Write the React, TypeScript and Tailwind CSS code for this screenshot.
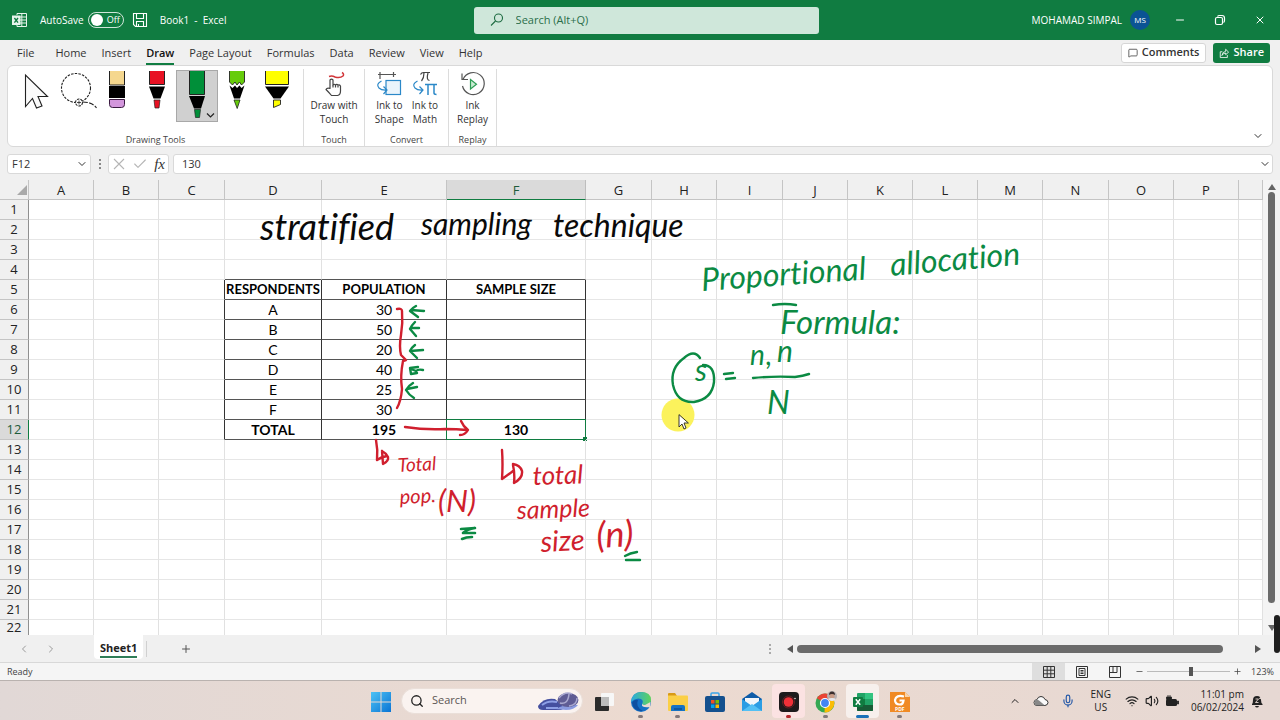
import React from "react";
import {
  ChevronDown,
  ChevronLeft,
  ChevronRight,
  ChevronUp,
  Check,
  Plus,
  Minus,
  Search,
  X,
  MessageSquare,
  Mic,
  Wifi,
  Volume2,
} from "lucide-react";

const UI = "font-['Open_Sans','Noto_Sans',sans-serif]";

/* ---------- Title bar ---------- */

function ExcelMark() {
  return (
    <svg viewBox="0 0 16 16" className="size-4" fill="none" stroke="#e6f4ec" strokeWidth="1">
      <path d="M5 3V1.500h9.500v13H5V13M5 5h9.500M8 8h6.500M5 11h9.500M9.800 1.500v13" />
      <rect x="0.500" y="4" width="7.500" height="8.500" fill="#e6f4ec" />
      <path d="M2.400 6l3.600 4.600M6 6l-3.600 4.600" stroke="#107c41" strokeWidth="1.400" />
    </svg>
  );
}

function TitleBar() {
  return (
    <header className="flex h-10 shrink-0 items-center bg-[#107c41] text-[11px] text-white">
      <div className="flex w-[37%] items-center pl-3">
        <ExcelMark />
        <span className="ml-3 text-[10px]" id="autosave">AutoSave</span>
        <button
          type="button"
          role="switch"
          aria-checked="false"
          aria-labelledby="autosave"
          className="ml-1 flex h-4 w-9 items-center gap-1 rounded-full border border-white/80 px-[2px]"
        >
          <span className="size-3 rounded-full bg-white" />
          <span className="text-[9px] leading-3">Off</span>
        </button>
        <button type="button" aria-label="Save" className="ml-2">
          <svg viewBox="0 0 16 16" className="size-4" fill="none" stroke="#fff" strokeWidth="1.100">
            <path d="M1.500 1.500h13v13H3.500l-2-2zM4.500 1.500v5h7v-5M4.500 14.500V9.500h7v5M6.500 12v2.500" />
          </svg>
        </button>
        <h1 className="ml-3 text-[10px] whitespace-pre">Book1  -  Excel</h1>
      </div>
      <label className="flex h-[27px] w-[27%] items-center gap-3 rounded-[3px] bg-[#cfe7da] pl-4 text-[#1d6b41]">
        <svg viewBox="0 0 14 14" className="size-[14px] shrink-0" fill="none" stroke="currentColor" strokeWidth="1.100">
          <circle cx="8.500" cy="5" r="4" />
          <path d="M5.500 8L1 12.500" />
        </svg>
        <input
          aria-label="Search"
          placeholder="Search (Alt+Q)"
          className="w-full bg-transparent text-[11px] outline-none placeholder:text-[#2b6e4a]"
        />
      </label>
      <div className="flex flex-1 items-center justify-end pr-3">
        <span className="text-[10px]">MOHAMAD SIMPAL</span>
        <span className="ml-2 flex size-5 items-center justify-center rounded-full bg-[#0b5394] text-[8px]">MS</span>
        <button type="button" aria-label="Minimize" className="ml-[22px] flex w-4 justify-center">
          <Minus className="size-3" strokeWidth={2} />
        </button>
        <button type="button" aria-label="Restore" className="ml-6 flex w-4 justify-center">
          <svg viewBox="0 0 12 12" className="size-3" fill="none" stroke="#fff" strokeWidth="1.200">
            <rect x="1.500" y="3.500" width="7" height="7" rx="1.500" />
            <path d="M3.500 2.500q.5-1 2-1h2.500q2.500 0 2.500 2.500v2.500q0 1.500-1 2" />
          </svg>
        </button>
        <button type="button" aria-label="Close" className="ml-6 flex w-4 justify-center">
          <X className="size-3" strokeWidth={2} />
        </button>
      </div>
    </header>
  );
}

/* ---------- Ribbon tabs ---------- */

const TABS = ["File", "Home", "Insert", "Draw", "Page Layout", "Formulas", "Data", "Review", "View", "Help"];

function RibbonTabs() {
  return (
    <div className="flex h-[25px] shrink-0 items-center justify-between pr-[10px] pl-[17px] text-[11px] text-[#333]">
      <nav className="flex items-center gap-[15px] pt-[2px]">
        {TABS.map((t) => (
          <button
            key={t}
            type="button"
            className={
              t === "Draw"
                ? "border-b-2 border-[#107c41] leading-5 font-semibold text-[#111]"
                : t === "File"
                  ? "mr-[6px] border-b-2 border-transparent leading-5"
                  : "border-b-2 border-transparent leading-5"
            }
          >
            {t}
          </button>
        ))}
      </nav>
      <div className="flex items-center gap-[7px]">
        <button
          type="button"
          className="flex h-5 items-center gap-1 rounded-[3px] border border-[#d6d6d6] bg-white px-[6px] font-semibold"
        >
          <MessageSquare className="size-[10px]" strokeWidth={1.8} />
          Comments
        </button>
        <button
          type="button"
          className="flex h-5 items-center gap-1 rounded-[3px] bg-[#107c41] px-[6px] font-semibold text-white"
        >
          <svg viewBox="0 0 12 12" className="size-[10px]" fill="none" stroke="#fff" strokeWidth="1">
            <path d="M4 4.500H1.500v7h8.500V8.500M3.500 9q.5-4.500 4.500-5V1.500L11.500 5 8 8V6Q5 6 3.500 9z" />
          </svg>
          Share
        </button>
      </div>
    </div>
  );
}

/* ---------- Ribbon ---------- */

function ToolSelect() {
  return (
    <svg viewBox="0 0 40 50" className="h-[50px] w-10" fill="#fafafa" stroke="#222" strokeWidth="1.100">
      <path d="M8.500 4v31.500l7-8 4 9.500 5.500-2-4-9.500h9.500z" />
    </svg>
  );
}

function ToolLasso() {
  return (
    <svg viewBox="0 0 40 50" className="h-[50px] w-10" fill="none" stroke="#222" strokeWidth="1.100">
      <circle cx="19" cy="17" r="14.500" strokeDasharray="2.500 1.200" />
      <circle cx="22" cy="31.500" r="3.500" fill="#fff" strokeDasharray="2.500 1" />
      <path d="M20 31.500h4M22 29.500v4" strokeWidth=".8" />
      <path d="M25.500 31q10 0 14 6" strokeDasharray="5 1.500" />
    </svg>
  );
}

function ToolEraser() {
  return (
    <svg viewBox="0 0 40 50" className="h-[50px] w-10">
      <path d="M12.500 0v14h15V0" fill="#f5d78e" stroke="#222" />
      <path d="M12 15h16v12H12z" fill="#000" />
      <path d="M12.500 28.500h15v5q0 3-3 3h-9q-3 0-3-3z" fill="#d396dc" stroke="#3a1a40" />
    </svg>
  );
}

function ToolPen({ color }: { color: string }) {
  return (
    <svg viewBox="0 0 40 50" className="h-[50px] w-10">
      <path d="M12.500 0v13.500h15V0" fill={color} stroke="#222" />
      <path d="M12 15.500h16L23.500 27.500h-7z" fill="#000" />
      <path d="M17 29h6l-1 8h-4z" fill={color} stroke="#222" strokeWidth=".7" />
    </svg>
  );
}

function ToolPenActive() {
  return (
    <svg viewBox="0 0 40 50" className="h-[50px] w-10">
      <path d="M12.500 0v23.500h15V0" fill="#008f39" stroke="#222" />
      <path d="M12 25h16l-4 12.500h-7z" fill="#000" />
      <path d="M17.500 38.500h6l-1 8h-4z" fill="#008f39" stroke="#222" strokeWidth=".7" />
      <path d="M30 42.500l3.500 3.500 3.500-3.500" fill="none" stroke="#222" strokeWidth="1.200" />
    </svg>
  );
}

function ToolPencil() {
  return (
    <svg viewBox="0 0 40 50" className="h-[50px] w-10">
      <path d="M12.500 0v11l3 3 2.500-3 2 3 2.500-3 2 3 3-3V0" fill="#66cc0a" stroke="#222" strokeWidth=".9" />
      <path d="M12.500 14.500l3 2.500 2.500-2.500 2 2.500 2.500-2.500 2 2.500 3-2.500-4.500 13h-6z" fill="#000" />
      <path d="M17 29h6l-2.800 8.500z" fill="#66cc0a" stroke="#222" strokeWidth=".8" />
    </svg>
  );
}

function ToolHighlighter() {
  return (
    <svg viewBox="0 0 40 50" className="h-[50px] w-10">
      <path d="M8.500 0v13.500h23V0" fill="#ff0" stroke="#222" />
      <path d="M8 15.500h24l-8.500 12h-7z" fill="#000" />
      <path d="M16.500 29h7v4.500l-7 3z" fill="#ff0" stroke="#222" strokeWidth=".9" />
    </svg>
  );
}

const TOOLS: { label: string; icon: React.ReactNode; active?: boolean }[] = [
  { label: "Select", icon: <ToolSelect /> },
  { label: "Lasso Select", icon: <ToolLasso /> },
  { label: "Eraser", icon: <ToolEraser /> },
  { label: "Pen: Red", icon: <ToolPen color="#e81123" /> },
  { label: "Pen: Green", icon: <ToolPenActive />, active: true },
  { label: "Pencil: Lime", icon: <ToolPencil /> },
  { label: "Highlighter: Yellow", icon: <ToolHighlighter /> },
];

function TouchIcon() {
  return (
    <svg viewBox="0 0 24 26" className="h-[26px] w-6" fill="none" stroke="#444" strokeWidth="1.200" strokeLinejoin="round">
      <path d="M8 17.500V9q1.500-1.600 3 0v5q1.200-1.500 2.500 0 1.300-1.200 2.500.2 1.400-.8 2.500.8v5q0 4-3 4.500H9.500Q7.500 22 4 18.500q1-2 4-1z" />
      <path d="M11 14v2.500M13.500 14v2.500M16 14.500v2" />
      <path d="M7 5.500q3-1 6 .5 5 1.500 8-1 1.500-2-1-3.500" stroke="#d13438" strokeWidth="1.500" />
    </svg>
  );
}

function ShapeIcon() {
  return (
    <svg viewBox="0 0 26 26" className="h-[26px] w-[26px]" fill="none" strokeWidth="1.200">
      <path d="M2 3.500h18M4 1v7M17.500 1v5" stroke="#555" />
      <rect x="10" y="9.500" width="14.500" height="14" fill="#eaf4fb" stroke="#2b88c8" />
      <path d="M5.500 10q-6 3-2.500 7 2.500 2.500 8 2M7.500 15.500l3.500 3.500-3.500 4" stroke="#2b88c8" />
    </svg>
  );
}

function MathIcon() {
  return (
    <svg viewBox="0 0 26 26" className="h-[26px] w-[26px]" fill="none" strokeWidth="1.200">
      <path d="M8.500 3.500q1-2 3-2h6.500M12 2q0 5-2.500 8M16 2q-2 7 1.500 7.500" stroke="#444" />
      <path d="M5.500 10q-6 3-2.500 7 2.500 2.500 8 2M7.500 15.500l3.500 3.500-3.500 4" stroke="#2b88c8" />
      <path d="M13 13.500h12M16 13.500V24M22 13.500V22q0 1.500 2.500 1.500" stroke="#2b88c8" strokeWidth="1.500" />
    </svg>
  );
}

function ReplayIcon() {
  return (
    <svg viewBox="0 0 26 26" className="h-[26px] w-[26px]" fill="none" strokeWidth="1.200">
      <path d="M3 8.500A11 11 0 1 1 2.500 15M2 2.500v6h6" stroke="#555" />
      <path d="M10.500 8.500v9.500l6-4.800z" fill="#c9ecd3" stroke="#2e9e56" />
    </svg>
  );
}

function BigButton({ icon, top, bottom }: { icon: React.ReactNode; top: string; bottom: string }) {
  return (
    <button type="button" className="flex flex-col items-center text-[10px] leading-[14px] whitespace-nowrap text-[#333]">
      {icon}
      <span className="mt-px">{top}</span>
      <span>{bottom}</span>
    </button>
  );
}

function Group({ label, width, children }: { label: string; width: string; children: React.ReactNode }) {
  return (
    <section className={"flex flex-col items-center justify-between border-r border-[#dcdcdc] " + width}>
      <div className="flex justify-center pt-[2px]">{children}</div>
      <h2 className="text-[9px] leading-3 text-[#444]">{label}</h2>
    </section>
  );
}

function Ribbon() {
  return (
    <div className="mx-[7px] flex h-[82px] shrink-0 items-end justify-between rounded-md border border-[#d9d9d9] bg-white pr-1">
      <div className="flex h-full pt-[3px]">
        <Group label="Drawing Tools" width="w-[296px]">
          <div className="flex pl-[2px]">
            {TOOLS.map((t) => (
              <button
                key={t.label}
                type="button"
                aria-label={t.label}
                className={t.active ? "bg-[#d0d0d0] outline outline-[#a8a8a8]" : ""}
              >
                {t.icon}
              </button>
            ))}
          </div>
        </Group>
        <Group label="Touch" width="w-[61px]">
          <BigButton icon={<TouchIcon />} top="Draw with" bottom="Touch" />
        </Group>
        <Group label="Convert" width="w-[84px]">
          <div className="flex gap-2">
            <BigButton icon={<ShapeIcon />} top="Ink to" bottom="Shape" />
            <BigButton icon={<MathIcon />} top="Ink to" bottom="Math" />
          </div>
        </Group>
        <Group label="Replay" width="w-12">
          <BigButton icon={<ReplayIcon />} top="Ink" bottom="Replay" />
        </Group>
      </div>
      <button type="button" aria-label="Ribbon display options" className="p-1">
        <ChevronDown className="size-3 text-[#333]" />
      </button>
    </div>
  );
}

/* ---------- Formula bar ---------- */

function FormulaBar() {
  return (
    <div className="mx-[7px] mt-[7px] mb-[6px] flex h-5 shrink-0 items-stretch text-[11px] text-[#333]">
      <div className="flex w-[84px] items-center rounded-[3px] border border-[#d9d9d9] bg-white pr-[2px] pl-1">
        <input aria-label="Name box" defaultValue="F12" className="w-full min-w-0 bg-transparent outline-none" />
        <ChevronDown className="size-3 shrink-0" />
      </div>
      <div className="flex w-[17px] flex-col items-center justify-center gap-[2px]">
        <span className="size-[2px] bg-[#888]" />
        <span className="size-[2px] bg-[#888]" />
        <span className="size-[2px] bg-[#888]" />
      </div>
      <div className="flex w-[61px] items-center justify-between rounded-[3px] border border-[#d9d9d9] bg-white px-[3px]">
        <button type="button" aria-label="Cancel">
          <svg viewBox="0 0 14 14" className="size-[14px]" fill="none" stroke="#b5b5b5" strokeWidth="1.100">
            <path d="M2 2l10 10M12 2L2 12" />
          </svg>
        </button>
        <button type="button" aria-label="Enter">
          <Check className="size-4 text-[#b5b5b5]" strokeWidth={1.6} />
        </button>
        <button type="button" aria-label="Insert function" className="font-['Liberation_Serif',serif] text-[15px] leading-4 italic">
          fx
        </button>
      </div>
      <div className="ml-1 flex flex-1 items-center rounded-[3px] border border-[#d9d9d9] bg-white pr-px pl-2">
        <input aria-label="Formula" defaultValue="130" className="w-full bg-transparent outline-none" />
        <ChevronDown className="size-3 shrink-0" />
      </div>
    </div>
  );
}

/* ---------- Sheet ---------- */

const COLUMNS = [
  { name: "A", width: "w-[65px]" },
  { name: "B", width: "w-[65px]" },
  { name: "C", width: "w-[66px]" },
  { name: "D", width: "w-[97px]" },
  { name: "E", width: "w-[125px]" },
  { name: "F", width: "w-[139px]" },
  { name: "G", width: "w-[66px]" },
  { name: "H", width: "w-[65px]" },
  { name: "I", width: "w-[66px]" },
  { name: "J", width: "w-[65px]" },
  { name: "K", width: "w-[65px]" },
  { name: "L", width: "w-[65px]" },
  { name: "M", width: "w-[65px]" },
  { name: "N", width: "w-[66px]" },
  { name: "O", width: "w-[65px]" },
  { name: "P", width: "w-[65px]" },
  { name: "", width: "" },
];

const DATA: Record<number, string[]> = {
  5: ["RESPONDENTS", "POPULATION", "SAMPLE SIZE"],
  6: ["A", "30", ""],
  7: ["B", "50", ""],
  8: ["C", "20", ""],
  9: ["D", "40", ""],
  10: ["E", "25", ""],
  11: ["F", "30", ""],
  12: ["TOTAL", "195", "130"],
};

const LAST_ROW = 22;

function cellClass(row: number, col: number) {
  const inRows = row >= 5 && row <= 12;
  const height = row === LAST_ROW ? "h-4" : "h-5";
  const right = inRows && col >= 2 && col <= 5 ? "border-r-[#333]" : "border-r-[#e1e1e1]";
  const bottom = row >= 4 && row <= 12 && col >= 3 && col <= 5 ? "border-b-[#555]" : "border-b-[#e6e6e6]";
  const weight = row === 5 ? "font-bold text-[13px]" : row === 12 ? "font-bold" : "";
  return `relative border-r border-b p-0 text-center leading-[19px] whitespace-nowrap ${height} ${right} ${bottom} ${weight}`;
}

function rowHeadClass(row: number) {
  const base = "border-r border-b border-b-[#c4c4c4] p-0 font-['Open_Sans','Noto_Sans',sans-serif] text-[13px] font-normal";
  if (row === 12) return `${base} h-5 border-r-[#107c41] bg-[#dadada] leading-[19px] text-[#1e5c3a]`;
  if (row === LAST_ROW) return `${base} h-4 border-r-[#8f8f8f] bg-[#f0f0f0] leading-[15px] text-[#222]`;
  return `${base} h-5 border-r-[#8f8f8f] bg-[#f0f0f0] leading-[19px] text-[#222]`;
}

function Sheet() {
  const rows = Array.from({ length: LAST_ROW }, (_, i) => i + 1);
  return (
    <table className="w-full table-fixed border-separate border-spacing-0 bg-white font-['Lato',sans-serif] text-[14px] text-black">
      <colgroup>
        <col className="w-[29px]" />
        {COLUMNS.map((c, i) => (
          <col key={i} className={c.width} />
        ))}
      </colgroup>
      <thead className="font-['Open_Sans','Noto_Sans',sans-serif] text-[13px] leading-[18px]">
        <tr>
          <th className="h-5 border-r border-b border-[#c4c4c4] bg-[#f0f0f0] p-0">
            <svg viewBox="0 0 12 12" className="ml-auto size-3">
              <path d="M11 1v10H1z" fill="#a9a9a9" />
            </svg>
          </th>
          {COLUMNS.map((c, i) => (
            <th
              key={i}
              scope="col"
              className={
                c.name === "F"
                  ? "h-5 border-r border-b border-r-[#bdbdbd] border-b-[#107c41] bg-[#dadada] p-0 pt-px font-normal text-[#1e5c3a]"
                  : "h-5 border-r border-b border-[#c4c4c4] bg-[#f0f0f0] p-0 pt-px font-normal text-[#222]"
              }
            >
              {c.name}
            </th>
          ))}
        </tr>
      </thead>
      <tbody>
        {rows.map((r) => (
          <tr key={r}>
            <th scope="row" className={rowHeadClass(r)}>
              {r}
            </th>
            {COLUMNS.map((_, i) => (
              <td key={i} className={cellClass(r, i)}>
                {i >= 3 && i <= 5 && DATA[r] ? DATA[r][i - 3] : null}
                {r === 12 && i === 5 && (
                  <span className="absolute -inset-px border border-[#107c41]">
                    <span className="absolute -right-[2px] -bottom-[2px] size-1 bg-[#107c41]" />
                  </span>
                )}
              </td>
            ))}
          </tr>
        ))}
      </tbody>
    </table>
  );
}

/* ---------- Ink annotations ---------- */

const BLACK = "#0a0a0a";
const GREEN = "#0b8a43";
const RED = "#d01f2e";

const NOTES = [
  { text: "stratified", x: 260, y: 240, size: 36, turn: 0, color: BLACK },
  { text: "sampling", x: 421, y: 235, size: 30, turn: 0, color: BLACK },
  { text: "technique", x: 553, y: 237, size: 32, turn: 0, color: BLACK },
  { text: "Proportional", x: 702, y: 291, size: 32, turn: -4, color: GREEN },
  { text: "allocation", x: 891, y: 276, size: 32, turn: -5, color: GREEN },
  { text: "Formula:", x: 780, y: 334, size: 33, turn: 0, color: GREEN },
  { text: "s", x: 695, y: 381, size: 30, turn: 0, color: GREEN },
  { text: "n", x: 750, y: 365, size: 28, turn: 0, color: GREEN },
  { text: ",", x: 766, y: 365, size: 28, turn: 0, color: GREEN },
  { text: "n", x: 777, y: 362, size: 30, turn: 0, color: GREEN },
  { text: "N", x: 767, y: 414, size: 32, turn: 0, color: GREEN },
  { text: "Total", x: 398, y: 472, size: 19, turn: -3, color: RED },
  { text: "pop.", x: 400, y: 504, size: 20, turn: -3, color: RED },
  { text: "(N)", x: 438, y: 512, size: 31, turn: 0, color: RED },
  { text: "total", x: 533, y: 485, size: 26, turn: -2, color: RED },
  { text: "sample", x: 517, y: 519, size: 25, turn: -2, color: RED },
  { text: "size", x: 541, y: 552, size: 29, turn: -3, color: RED },
  { text: "(n)", x: 597, y: 548, size: 36, turn: -3, color: RED },
];

function Ink() {
  return (
    <svg
      viewBox="0 180 1263 455"
      className="pointer-events-none absolute top-0 left-0 h-[455px] w-[1263px] font-['Lato',sans-serif] [font-variant-ligatures:none]"
      fill="none"
      strokeLinecap="round"
      strokeLinejoin="round"
    >
      <circle cx="678" cy="415" r="16.500" fill="#fbf25c" />
      {NOTES.map((n, i) => (
        <text
          key={i}
          x={n.x}
          y={n.y}
          fontSize={n.size}
          fontStyle="italic"
          fill={n.color}
          transform={`rotate(${n.turn} ${n.x} ${n.y})`}
        >
          {n.text}
        </text>
      ))}
      <g stroke={GREEN} strokeWidth="2.400">
        <path d="M773 305q12-2 23 0" />
        <path d="M700 358q-6-9-16 0-14 10-11 27 4 18 21 17 18-3 20-20 1-17-11-17" />
        <path d="M724 374l9-1M726 379l9-1" />
        <path d="M753 378q20-2 42-1 8-1 14-3" />
        <path d="M424 311l-13-1M416 306q-4 2-6 5l8 6" />
        <path d="M419 328h-7M415 322q-4 4-5 7l6 7" />
        <path d="M423 350l-13 1M415 345q-4 3-5 6l7 7" />
        <path d="M423 370q-5-1-7 1l-5-2M418 367l-8 1 1 6 6-1" />
        <path d="M417 387l-10 2M413 383q-5 3-7 7 3 5 8 8" />
        <path d="M461 529l14-1q-8 1-12 5h12M462 539q4-2 10-2" strokeWidth="2.600" />
        <path d="M625 556q5-3 12-4M626 560h14" />
      </g>
      <g stroke={RED} strokeWidth="2.400">
        <path d="M397 309q5-1 5 2 1 12-1 24-2 12 0 20l5 5-3 1q-3 15-1 28-1 12-5 19" />
        <path d="M405 427q20 3 40 2 12 0 22 1M461 421q2 5 7 9-3 5-8 5" />
        <path d="M376 440q2 10 1 20 4-3 10-4M382 451l1 13q6-3 5-7-2-4-6-6" />
        <path d="M502 450q1 14 0 29 6-4 11-8M513 465q2 9 1 18 9-5 8-12-2-6-9-7" />
      </g>
      <path d="M679 415v12l3-3 2 5 2-1-2-5h4z" fill="#fff" stroke="#222" strokeWidth=".9" />
    </svg>
  );
}

function VerticalScroll() {
  return (
    <div className="flex w-[17px] shrink-0 flex-col items-center gap-[2px] bg-[#f4f4f4] py-1">
      <svg viewBox="0 0 8 6" className="h-[6px] w-2 shrink-0">
        <path d="M4 0l4 6H0z" fill="#666" />
      </svg>
      <div className="mb-5 w-[7px] flex-1 rounded-full bg-[#6b6b6b]" />
      <svg viewBox="0 0 8 6" className="h-[6px] w-2 shrink-0">
        <path d="M4 6l4-6H0z" fill="#666" />
      </svg>
    </div>
  );
}

/* ---------- Sheet tabs and status ---------- */

function SheetTabs() {
  return (
    <div className="flex h-[27px] shrink-0 items-center bg-[#f0f0f0]">
      <div className="flex w-[94px] gap-[15px] pl-[18px] text-[#9a9a9a]">
        <button type="button" aria-label="Previous sheet">
          <ChevronLeft className="size-3" />
        </button>
        <button type="button" aria-label="Next sheet">
          <ChevronRight className="size-3" />
        </button>
      </div>
      <button type="button" className="h-6 self-start rounded-b bg-white px-[6px] pt-[3px] text-[11px] font-bold text-[#222]">
        <span className="block border-b-2 border-[#2f7d57] leading-[17px]">Sheet1</span>
      </button>
      <span className="ml-[3px] h-4 w-px bg-[#d0d0d0]" />
      <button type="button" aria-label="New sheet" className="ml-[33px]">
        <Plus className="size-3 text-[#555]" />
      </button>
      <div className="ml-auto flex w-[40%] items-center pr-[19px] pl-px">
        <span className="flex flex-col gap-[2px]">
          <span className="size-[2px] bg-[#aaa]" />
          <span className="size-[2px] bg-[#aaa]" />
          <span className="size-[2px] bg-[#aaa]" />
        </span>
        <svg viewBox="0 0 6 8" className="ml-4 h-2 w-[6px]">
          <path d="M0 4l6-4v8z" fill="#555" />
        </svg>
        <div className="mr-8 ml-1 h-2 flex-1 rounded-full bg-[#6b6b6b]" />
        <svg viewBox="0 0 6 8" className="h-2 w-[6px]">
          <path d="M6 4L0 0v8z" fill="#555" />
        </svg>
      </div>
    </div>
  );
}

function StatusBar() {
  return (
    <footer className="flex h-[18px] shrink-0 items-center border-t border-[#d8d8d8] bg-[#f5f5f5] pr-[6px] pl-[7px] text-[9px] text-[#444]">
      <span>Ready</span>
      <div className="ml-auto flex h-full items-center">
        <button type="button" aria-label="Normal view" className="flex h-full w-[33px] items-center justify-center bg-[#dedede]">
          <svg viewBox="0 0 12 12" className="size-3" fill="none" stroke="#333">
            <path d="M.5.5h11v11H.5zM4.200.500v11M7.800.500v11M.5 4.200h11M.5 7.800h11" />
          </svg>
        </button>
        <button type="button" aria-label="Page layout view" className="flex h-full w-[33px] items-center justify-center">
          <svg viewBox="0 0 12 12" className="size-3" fill="none" stroke="#333">
            <path d="M.5.5h11v11H.5zM3 2.500h6v7H3zM4.500 4.500h3M4.500 6h3M4.500 7.500h3" />
          </svg>
        </button>
        <button type="button" aria-label="Page break view" className="flex h-full w-[33px] items-center justify-center">
          <svg viewBox="0 0 12 12" className="size-3" fill="none" stroke="#333">
            <path d="M.5.5h11v11H.5zM4 .500v6M8 .500v6H.5" />
          </svg>
        </button>
        <button type="button" aria-label="Zoom out" className="ml-1">
          <Minus className="size-[9px]" />
        </button>
        <input
          type="range"
          aria-label="Zoom"
          defaultValue={53}
          className="mx-[3px] h-3 w-[83px] appearance-none bg-transparent [&::-webkit-slider-runnable-track]:h-px [&::-webkit-slider-runnable-track]:bg-[#bbb] [&::-webkit-slider-thumb]:-mt-[4px] [&::-webkit-slider-thumb]:h-[9px] [&::-webkit-slider-thumb]:w-1 [&::-webkit-slider-thumb]:appearance-none [&::-webkit-slider-thumb]:bg-[#555]"
        />
        <button type="button" aria-label="Zoom in">
          <Plus className="size-[9px]" />
        </button>
        <span className="ml-[9px]">123%</span>
      </div>
    </footer>
  );
}

/* ---------- Taskbar ---------- */

function AppButton({
  label,
  children,
  tile = "",
  mark = "",
}: {
  label: string;
  children: React.ReactNode;
  tile?: string;
  mark?: string;
}) {
  return (
    <button
      type="button"
      aria-label={label}
      className={"flex h-[34px] w-[33px] flex-col items-center justify-end rounded " + tile}
    >
      <svg viewBox="0 0 22 22" className="size-[22px]">
        {children}
      </svg>
      <span className={"mt-[2px] h-[3px] rounded-full " + mark} />
    </button>
  );
}

function Taskbar() {
  return (
    <div className="grid h-10 shrink-0 grid-cols-[1fr_auto_1fr] items-center border-t border-[#b9b2af] bg-linear-to-r from-[#e1d8d6] via-[#ecdad0] to-[#e6d8d3]">
      <span />
      <div className="flex items-center gap-1">
        <AppButton label="Start">
          <defs>
            <linearGradient id="win" x1="0" y1="0" x2="1" y2="1">
              <stop offset="0" stopColor="#4cc2f5" />
              <stop offset="1" stopColor="#0a74d4" />
            </linearGradient>
          </defs>
          <path d="M1 1h9.500v9.500H1zM11.500 1H21v9.500h-9.500zM1 11.500h9.500V21H1zM11.500 11.500H21V21h-9.500z" fill="url(#win)" />
        </AppButton>
        <label className="flex h-[26px] w-[182px] items-center rounded-full border border-[#eadfd9] bg-[#faf3f0] pr-[2px] pl-2">
          <Search className="size-[14px] shrink-0 text-[#222]" strokeWidth={2.2} />
          <input
            aria-label="Search Windows"
            placeholder="Search"
            className="ml-2 w-full min-w-0 bg-transparent text-[11px] outline-none placeholder:text-[#5b5654]"
          />
          <svg viewBox="0 0 42 20" className="h-5 w-[42px] shrink-0">
            <path d="M0 15Q6 6 17 8l10 9-4 2H5q-5 0-5-4z" fill="#4550a0" />
            <path d="M4 14q6-5 15-3M8 17h12" stroke="#8ea0e6" strokeWidth="2" fill="none" />
            <path d="M18 18q10-6 22-4-4 5-12 5z" fill="#8b9be0" />
            <ellipse cx="30" cy="9" rx="10.500" ry="7" fill="#5f5c94" />
            <path d="M21 7q6-7 13-4M22 12q8 2 9-9M31 15q8-1 8-8" stroke="#aaa9d0" strokeWidth="1.500" fill="none" />
          </svg>
        </label>
        <AppButton label="Task view">
          <rect x="8" y="2" width="13" height="13" rx="1" fill="#f7f7f7" />
          <rect x="2" y="6" width="14" height="14" rx="1" fill="#2b2b2b" />
          <path d="M8 6h8v9H8z" fill="#bcbcbc" />
        </AppButton>
        <AppButton label="Edge" mark="w-[5px] bg-[#84797a]">
          <defs>
            <linearGradient id="edge" x1="0" y1="0" x2="1" y2="0">
              <stop offset="0" stopColor="#2aa8e0" />
              <stop offset="1" stopColor="#5fd35c" />
            </linearGradient>
          </defs>
          <circle cx="11" cy="11" r="10" fill="#1470c6" />
          <path d="M1 11Q2 1 11 1q10 0 10 8 0 5-6 5-3 0-3-1 2-3-1-5Q6 6 1 11z" fill="url(#edge)" />
          <path d="M12 13q-1 4 8 3l.5-5-5.500 3q-2 0-3-1z" fill="#e8dad2" />
          <path d="M8 9q-3 7 5 11-9 1-11-8 2-4 6-3z" fill="#0d4fa0" />
        </AppButton>
        <AppButton label="File Explorer" mark="w-[5px] bg-[#84797a]">
          <path d="M1 3q0-1 1-1h6l2 3H1z" fill="#d99a16" />
          <path d="M1 4.500h19q1 0 1 1V19q0 1-1 1H2q-1 0-1-1z" fill="#fbcf46" />
          <path d="M4 20v-4q0-2 2-2h10q2 0 2 2v4z" fill="#1673c4" />
          <path d="M7 18h8" stroke="#0b4f93" strokeWidth="1.500" />
        </AppButton>
        <AppButton label="Microsoft Store">
          <path d="M7 6V3q0-1 1-1h6q1 0 1 1v3" fill="none" stroke="#39a4e8" strokeWidth="1.500" />
          <rect x="1" y="5" width="20" height="16" rx="2" fill="#14508e" />
          <path d="M7 9h3.500v3.500H7z" fill="#f25022" />
          <path d="M11.500 9H15v3.500h-3.500z" fill="#7fba00" />
          <path d="M7 13.500h3.500V17H7z" fill="#00a4ef" />
          <path d="M11.500 13.500H15V17h-3.500z" fill="#ffb900" />
        </AppButton>
        <AppButton label="Mail">
          <path d="M1 8L11 1l10 7v12H1z" fill="#0e5ca8" />
          <path d="M4 7h14v6l-7 4-7-4z" fill="#f2f6fa" />
          <path d="M1 8l10 7 10-7v12H1z" fill="#2b9de4" />
          <path d="M1 20l10-7 10 7z" fill="#53c0f4" />
        </AppButton>
        <AppButton label="Screen recorder" tile="bg-[#fbe2e2]" mark="w-[5px] bg-[#b3262b]">
          <rect x="1" y="1" width="20" height="20" rx="4" fill="#1d1a1c" />
          <circle cx="10.500" cy="11" r="6" fill="none" stroke="#6b1e22" />
          <circle cx="10.500" cy="11" r="4.800" fill="#ef3038" />
          <circle cx="17" cy="7.500" r=".8" fill="#ddd" />
        </AppButton>
        <AppButton label="Chrome" mark="w-[5px] bg-[#84797a]">
          <circle cx="10" cy="12" r="9.500" fill="#34a853" />
          <path d="M10 12L1.800 7.200Q5 2.500 10 2.500q5.500 0 8.200 5z" fill="#ea4335" />
          <path d="M10 12l8.200-4.500q2.500 5-.5 9.500-3 4.500-8.200 4.500z" fill="#fbbc05" />
          <circle cx="10" cy="12" r="4.500" fill="#4285f4" stroke="#fff" strokeWidth="1.200" />
          <circle cx="17" cy="5" r="5" fill="#b7b1b3" />
          <circle cx="17" cy="5" r="2.600" fill="#c99b86" />
          <path d="M14 4q0-3.500 3-3.500T20 4q-3-2-6 0z" fill="#3a2c2c" />
          <path d="M13 8q4-2 8 0-1.500 2-4 2t-4-2z" fill="#e8e8ee" />
        </AppButton>
        <AppButton label="Excel" tile="bg-[#f7f0ed]" mark="w-[13px] bg-[#1971b8]">
          <rect x="5" y="2" width="16" height="18" rx="1" fill="#21a366" />
          <path d="M13 2h7q1 0 1 1v5h-8z" fill="#33c481" />
          <path d="M5 8h8v6H5z" fill="#107c41" />
          <path d="M5 14h16v5q0 1-1 1H6q-1 0-1-1z" fill="#185c37" />
          <path d="M13 8h8v6h-8z" fill="#21a366" />
          <rect x="1" y="6" width="10" height="10" rx="1" fill="#107c41" />
          <path d="M3.800 8.300l4.400 5.500M8.200 8.300l-4.400 5.500" stroke="#fff" strokeWidth="1.500" />
        </AppButton>
        <AppButton label="PDF reader" mark="w-[5px] bg-[#84797a]">
          <path d="M1 1h15l5 5v15H1z" fill="#f08a24" />
          <path d="M16 1l5 5h-5z" fill="#fbd3a6" />
          <path d="M15 5.500q-8-2-9 3.500 0 4.500 5 4.500 3 0 3.500-4h-4" fill="none" stroke="#fff" strokeWidth="2.200" />
          <text x="6" y="20" fontSize="5" fontWeight="700" fill="#fff">PDF</text>
        </AppButton>
      </div>
      <div className="flex items-center justify-end gap-[6px] pr-4 text-[10px] leading-[13px] text-[#222]">
        <button type="button" aria-label="Hidden icons" className="mr-[6px]">
          <ChevronUp className="size-3" />
        </button>
        <svg viewBox="0 0 16 12" className="mr-[6px] h-3 w-4">
          <path d="M4 10.500q-3 0-3-3 0-2.500 3-3 1-3 4-3t4 3q3 .5 3 3t-3 3z" fill="#fafafa" stroke="#333" />
          <path d="M2 5q2-1 4 .5l6 5H4Q0 10 2 5z" fill="#888" />
        </svg>
        <Mic className="mr-[10px] size-[14px] text-[#2458a8]" />
        <div className="mr-2 text-center">
          <div>ENG</div>
          <div>US</div>
        </div>
        <Wifi className="size-[14px]" />
        <Volume2 className="size-[14px]" />
        <svg viewBox="0 0 14 12" className="mr-[6px] h-3 w-[14px]">
          <rect x="1" y="4" width="11" height="7" rx="1.500" fill="#222" />
          <path d="M12.500 6h1v3h-1zM3 0v2M5 0v2M1.500 2h5v2q-1 2-2.500 2T1.500 4z" fill="#222" stroke="#222" strokeWidth=".8" />
        </svg>
        <div className="text-right">
          <div>11:01 pm</div>
          <div>06/02/2024</div>
        </div>
        <svg viewBox="0 0 14 14" className="size-[14px]">
          <path d="M2 10q1-1 1-4 0-4 4-4t4 4q0 3 1.500 4v1H2zM5 12h4q-.5 1.500-2 1.500T5 12z" fill="#222" />
          <path d="M9.500.500h3.500l-3.500 4H13M5.500 5h3l-3 3.500h3" stroke="#e6d8d3" strokeWidth=".9" fill="none" />
        </svg>
      </div>
    </div>
  );
}

export default function App() {
  return (
    <div className={"relative flex h-screen flex-col overflow-hidden bg-[#f0f0f0] " + UI}>
      <TitleBar />
      <RibbonTabs />
      <Ribbon />
      <FormulaBar />
      <main className="flex min-h-0 flex-1">
        <div className="relative min-w-0 flex-1 overflow-hidden">
          <Sheet />
          <Ink />
        </div>
        <VerticalScroll />
      </main>
      <SheetTabs />
      <StatusBar />
      <Taskbar />
      <div className="absolute right-0 bottom-[67px] h-[38px] w-[6px] rounded-full bg-[#1f1f1f]" />
    </div>
  );
}
